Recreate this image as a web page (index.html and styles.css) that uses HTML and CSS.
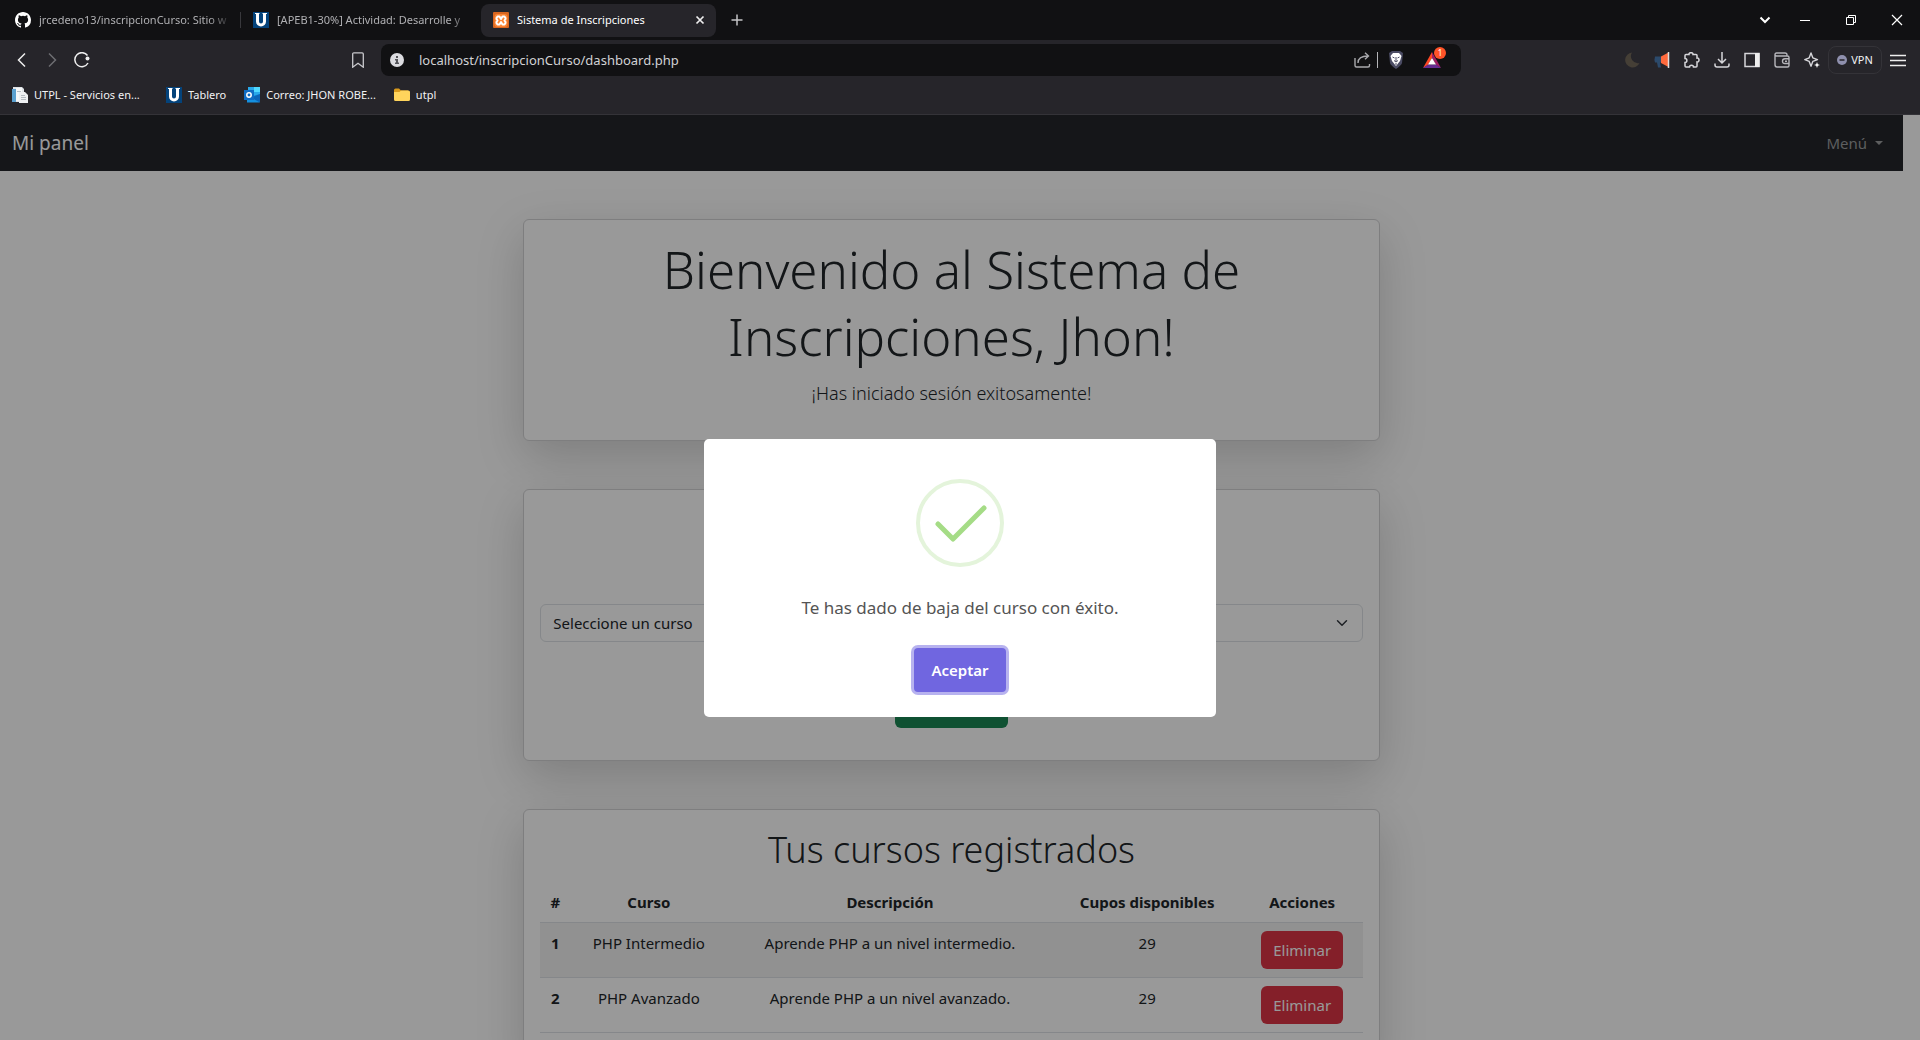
FILE: index.html
```html
<!DOCTYPE html>
<html lang="es">
<head>
<meta charset="utf-8">
<title>Sistema de Inscripciones</title>
<link rel="stylesheet" href="styles.css">
</head>
<body>
<header class="browser">
  <div class="tabstrip">
    <div class="tab">
      <svg class="icon16" viewBox="0 0 16 16"><path fill="#fff" d="M8 0C3.58 0 0 3.58 0 8c0 3.54 2.29 6.53 5.47 7.59.4.07.55-.17.55-.38 0-.19-.01-.82-.01-1.49-2.01.37-2.53-.49-2.69-.94-.09-.23-.48-.94-.82-1.13-.28-.15-.68-.52-.01-.53.63-.01 1.08.58 1.23.82.72 1.21 1.87.87 2.33.66.07-.52.28-.87.51-1.07-1.78-.2-3.64-.89-3.64-3.95 0-.87.31-1.59.82-2.15-.08-.2-.36-1.02.08-2.12 0 0 .67-.21 2.2.82a7.6 7.6 0 0 1 4 0c1.53-1.04 2.2-.82 2.2-.82.44 1.1.16 1.92.08 2.12.51.56.82 1.27.82 2.15 0 3.07-1.87 3.75-3.65 3.95.29.25.54.73.54 1.48 0 1.07-.01 1.93-.01 2.2 0 .21.15.46.55.38A8.01 8.01 0 0 0 16 8c0-4.42-3.58-8-8-8z"/></svg>
      <span class="tab-title tab-title-faded">jrcedeno13/inscripcionCurso: Sitio w</span>
    </div>
    <div class="tab tab-divided">
      <svg class="icon16" viewBox="0 0 16 16"><path fill="#04437b" d="M0 0h16v16H0z"/><path fill="none" stroke="#fff" stroke-width="3" d="M4.500 1v8.500a3.500 3.500 0 0 0 7 0V1"/><path stroke="#fff" d="M2 1.500h4.500M9.500 1.500H14"/></svg>
      <span class="tab-title tab-title-faded">[APEB1-30%] Actividad: Desarrolle y</span>
    </div>
    <div class="tab tab-active">
      <svg class="icon16" viewBox="0 0 16 16"><rect width="16" height="16" rx="1" fill="#d9661f"/><rect x="1.500" y="2" width="13" height="13" rx="3" fill="#fb8534"/><path fill="none" stroke="#fff" stroke-width="2" stroke-linejoin="round" d="M5.500 4.500h-1L3.500 6v1l1 1.500-1 1.500v1l1 1.500h2L8 10l1.500 2.500h2l1-1.500v-1l-1-1.500 1-1.500V6l-1-1.500h-2L8 7 6.500 4.500z"/></svg>
      <span class="tab-title">Sistema de Inscripciones</span>
      <button class="bare" aria-label="Cerrar pestaña"><svg width="10" height="10" viewBox="0 0 10 10"><path d="M1.500 1.500l7 7M8.500 1.500l-7 7" stroke="#eee" stroke-width="1.700"/></svg></button>
    </div>
    <button class="bare new-tab" aria-label="Nueva pestaña"><svg width="12" height="12" viewBox="0 0 12 12"><path d="M6 .5v11M.5 6h11" stroke="#c4c4c6" stroke-width="1.500"/></svg></button>
    <div class="window-buttons">
      <button class="bare tab-search" aria-label="Buscar pestañas"><svg width="12" height="12" viewBox="0 0 12 12"><path d="M1.500 3.500L6 8l4.500-4.500" fill="none" stroke="#fff" stroke-width="2"/></svg></button>
      <button class="bare" aria-label="Minimizar"><svg width="12" height="12" viewBox="0 0 12 12"><path d="M1 6.500h10" stroke="#fff"/></svg></button>
      <button class="bare" aria-label="Restaurar"><svg width="12" height="12" viewBox="0 0 12 12"><path d="M1.500 3.500h7v7h-7zM3.500 3V1.500h7v7H9" fill="none" stroke="#fff"/></svg></button>
      <button class="bare" aria-label="Cerrar"><svg width="12" height="12" viewBox="0 0 12 12"><path d="M1 1l10 10M11 1L1 11" stroke="#fff" stroke-width="1.200"/></svg></button>
    </div>
  </div>
  <div class="toolbar">
    <div class="nav-buttons">
      <button class="bare" aria-label="Atrás"><svg width="16" height="16" viewBox="0 0 16 16"><path d="M11 1.500L4.500 8l6.500 6.500" fill="none" stroke="#eee" stroke-width="1.500"/></svg></button>
      <button class="bare" aria-label="Adelante"><svg width="16" height="16" viewBox="0 0 16 16"><path d="M5 1.500L11.500 8 5 14.500" fill="none" stroke="#6d6d72" stroke-width="1.500"/></svg></button>
      <button class="bare" aria-label="Recargar"><svg width="16" height="16" viewBox="0 0 16 16"><path d="M13.500 3.500A7 7 0 1 0 14 11" fill="none" stroke="#eee" stroke-width="1.500"/><circle cx="13.500" cy="6.500" r="2" fill="#eee"/></svg></button>
      <button class="bare bookmark" aria-label="Añadir marcador"><svg width="16" height="16" viewBox="0 0 16 16"><path d="M2.700 15.200V2q0-1.200 1.200-1.200h8.200q1.200 0 1.200 1.200v13.200L8 11.300z" fill="none" stroke="#c9c9cd" stroke-width="1.300"/></svg></button>
    </div>
    <div class="address">
      <svg width="14" height="14" viewBox="0 0 14 14"><circle cx="7" cy="7" r="7" fill="#dcdce0"/><path d="M6 3h2v2H6zM5 6h3v3.500h1V11H5V9.500h1v-2H5z" fill="#55555a"/></svg>
      <input class="url" aria-label="Dirección" value="localhost/inscripcionCurso/dashboard.php">
      <svg width="17" height="16" viewBox="0 0 17 16"><path d="M1 6v7.500q0 1.500 1.500 1.500h11.500q1.500 0 1.500-1.500V12M4 11c0-4 3-7 10-7M11 .8L14.500 4 11 7.300" fill="none" stroke="#a9a9ad" stroke-width="1.400"/></svg>
      <span class="divider"></span>
      <svg width="16" height="18" viewBox="0 0 16 18"><path d="M4 0h8l3 2-1 10q-.5 2-6 6-5.500-4-6-6L1 2z" fill="#4a4b63"/><path d="M5 2h6l2.500 3-1.500 5-4 5-4-5-1.500-5z" fill="#fff"/><path d="M4.500 6l2 1M11.500 6l-2 1M8 6v4M6 9.500l2 1.500 2-1.500M7 13h2" stroke="#4a4b63" fill="none"/></svg>
      <span class="rewards">
        <svg width="18" height="16" viewBox="0 0 18 16"><path fill="#ff4724" d="M9 0L0 16l5-3 4-7z"/><path fill="#9e1f63" d="M9 0l9 16-5-3-4-7z"/><path fill="#662d91" d="M0 16h18l-5-3.500H5z"/><path fill="#fff" d="M9 6l4 6.500H5z"/></svg>
        <span class="badge">1</span>
      </span>
    </div>
    <div class="extensions">
      <svg width="16" height="16" viewBox="0 0 16 16"><path d="M8 .5A7.500 7.500 0 1 0 15.500 11 7 7 0 0 1 8 .5z" fill="#453f36"/></svg>
      <svg width="16" height="16" viewBox="0 0 16 16"><path d="M1 4.500h6v6H6l1 5H4l-1-5H1q-1-3 0-6z" fill="#2c4a6b"/><path d="M7 4.500L14 .8v14L7 11z" fill="#ff6a3d"/><path d="M14.500 0v16" stroke="#ddd" stroke-width="1.500"/></svg>
      <svg width="16" height="16" viewBox="0 0 16 16"><path d="M1 3.500q0-1 1-1h3c-.5-2.500 4.500-2.500 4 0h3q1 0 1 1V6c2.700-.5 2.700 4.500 0 4v4q0 1-1 1H9.500c0-2.500-4-2.500-4 0H2q-1 0-1-1v-3.500c2.500 0 2.500-4 0-4z" fill="none" stroke="#d6d6da" stroke-width="1.500"/></svg>
      <svg width="16" height="16" viewBox="0 0 16 16"><path d="M8 0v10.500M4 7l4 4 4-4M1 11.500V13q0 2 2 2h10q2 0 2-2v-1.500" fill="none" stroke="#d6d6da" stroke-width="1.500"/></svg>
      <svg width="16" height="16" viewBox="0 0 16 16"><rect x="1" y="1.500" width="14" height="13" fill="none" stroke="#d6d6da" stroke-width="1.500"/><path d="M11 1h4.500v14H11z" fill="#eee"/></svg>
      <svg width="16" height="16" viewBox="0 0 16 16"><path d="M13 3.500V3q0-2-2-2H2.500Q1 1 1 2.500v10Q1 15 3 15h10.500q1.500 0 1.500-1.500v-8Q15 4 13.500 4H2.500Q1 4 1 2.500M15 6.800h-4q-2.500 0-2.500 2.400T11 11.500h4M11 9.200h2" fill="none" stroke="#b5b5ba" stroke-width="1.400"/></svg>
      <svg width="16" height="16" viewBox="0 0 16 16"><path d="M7 1l1.800 4.800L13.500 7.600 8.800 9.400 7 14.200 5.200 9.400.8 7.600l4.400-1.800z" fill="none" stroke="#d6d6da" stroke-width="1.400" stroke-linejoin="round"/><path d="M13 10l.8 2.200 2.200.8-2.200.8L13 16l-.8-2.200L10 13l2.200-.8z" fill="#fff"/></svg>
      <button class="vpn"><svg width="10" height="10" viewBox="0 0 10 10"><circle cx="5" cy="5" r="5" fill="#8f90ae"/><path d="M2.500 5h5" stroke="#26252a" stroke-width="1.500"/></svg>VPN</button>
      <button class="bare" aria-label="Menú del navegador"><svg width="16" height="14" viewBox="0 0 16 14"><path d="M0 2.500h16M0 7.500h16M0 12.500h16" stroke="#eee" stroke-width="1.500"/></svg></button>
    </div>
  </div>
  <nav class="bookmarks">
    <a href="#" class="mark mark-wide"><svg class="icon16" viewBox="0 0 16 16"><path fill="#dfe4e8" d="M1 0h9l2 2v13H1z"/><path fill="#5aa0cf" d="M0 2h4v13H0z"/><path fill="#f5f7f8" d="M4 1h6v13H4z"/><path fill="#eef0f2" d="M7 5h6l3 3v8H7z"/><path stroke="#b5bcc2" d="M9 8.500h4M9 10.500h5M9 12.500h5M5 4.500h4"/></svg>UTPL - Servicios en...</a>
    <a href="#" class="mark"><svg class="icon16" viewBox="0 0 16 16"><path fill="#04437b" d="M0 0h16v16H0z"/><path fill="none" stroke="#fff" stroke-width="3" d="M4.500 1v8.500a3.500 3.500 0 0 0 7 0V1"/><path stroke="#fff" d="M2 1.500h4.500M9.500 1.500H14"/></svg>Tablero</a>
    <a href="#" class="mark"><svg class="icon16" viewBox="0 0 16 16"><path fill="#28a8ea" d="M4 0h12v9H4z"/><path fill="#50d9ff" d="M10 0h6v5h-6z"/><path fill="#1490df" d="M3 15.500V10l13-3v7.500q0 1-1 1z"/><path fill="#0a64b8" d="M16 7v8.500l-9-5z"/><path fill="#0f6cc4" d="M0 3h10v10H0z"/><circle cx="5" cy="8" r="2.200" fill="none" stroke="#fff" stroke-width="1.500"/></svg>Correo: JHON ROBE...</a>
    <a href="#" class="mark"><svg class="icon16" viewBox="0 0 16 16"><path fill="#d99a1c" d="M0 3q0-1.500 1.500-1.500H5L7 3.500h7v3H0z"/><path fill="#ffd45c" d="M0 5h5.500L7 3.500h7.500Q16 3.500 16 5v7.500q0 1.500-1.500 1.500h-13Q0 14 0 12.500z"/></svg>utpl</a>
  </nav>
</header>

<div class="viewport">
  <div class="page">
    <nav class="navbar">
      <a href="#" class="brand">Mi panel</a>
      <button class="menu-toggle">Menú</button>
    </nav>
    <main class="content">
      <section class="card">
        <h1 class="display">Bienvenido al Sistema de Inscripciones, Jhon!</h1>
        <p class="lead">¡Has iniciado sesión exitosamente!</p>
      </section>
      <form class="card enroll">
        <select class="course-select" aria-label="Curso"><option>Seleccione un curso</option></select>
        <button type="button" class="enroll-button" aria-label="Inscribir"></button>
      </form>
      <section class="card">
        <h2 class="section-title">Tus cursos registrados</h2>
        <table class="courses">
          <colgroup><col class="col-number"><col class="col-course"><col><col class="col-seats"><col class="col-actions"></colgroup>
          <thead><tr><th>#</th><th>Curso</th><th>Descripción</th><th>Cupos disponibles</th><th>Acciones</th></tr></thead>
          <tbody>
            <tr><th>1</th><td>PHP Intermedio</td><td>Aprende PHP a un nivel intermedio.</td><td>29</td><td><button class="delete">Eliminar</button></td></tr>
            <tr><th>2</th><td>PHP Avanzado</td><td>Aprende PHP a un nivel avanzado.</td><td>29</td><td><button class="delete">Eliminar</button></td></tr>
          </tbody>
        </table>
      </section>
    </main>
  </div>
  <div class="overlay">
    <div class="dialog" role="dialog" aria-modal="true">
      <svg class="success" viewBox="0 0 88 88"><circle cx="44" cy="44" r="42" fill="none" stroke="#e4f4db" stroke-width="4"/><path d="M22 45l15 15 31-31" fill="none" stroke="#a5dc86" stroke-width="5" stroke-linecap="round" stroke-linejoin="round"/></svg>
      <p class="message">Te has dado de baja del curso con éxito.</p>
      <button class="accept">Aceptar</button>
    </div>
  </div>
</div>
</body>
</html>
```
FILE: styles.css
```css
* { box-sizing: border-box; }

body {
  margin: 0;
  height: 100vh;
  display: flex;
  flex-direction: column;
  overflow: hidden;
  font-family: "Noto Sans", "Open Sans", sans-serif;
  font-size: 15px;
  line-height: 24px;
  color: #212529;
  background: #fff;
}

button, select, input { font: inherit; color: inherit; }
svg { display: block; flex: none; }
h1, h2, p { margin: 0; font-weight: 300; }
a { text-decoration: none; color: inherit; }

.bare { border: 0; padding: 0; background: none; }
.icon16 { width: 16px; height: 16px; }

/* Browser frame */
.browser {
  flex: none;
  background: #26252a;
  border-bottom: 1px solid #343338;
  color: #f2f2f4;
  font-size: 11px;
  line-height: 16px;
}
.tabstrip {
  display: flex;
  align-items: center;
  height: 40px;
  padding-left: 3px;
  background: #111113;
}
.tab {
  display: flex;
  align-items: center;
  gap: 8px;
  width: 237px;
  height: 16px;
  padding: 0 8px 0 12px;
  color: #b0b0b3;
}
.tab-divided {
  width: 241px;
  border-left: 1px solid #38383c;
}
.tab-title {
  flex: 1;
  overflow: hidden;
  white-space: nowrap;
}
.tab-title-faded { mask-image: linear-gradient(to right, #000 88%, transparent); }
.tab-active {
  width: 235px;
  height: 33px;
  padding-right: 11px;
  border-radius: 8px;
  background: #26252a;
  color: #fff;
}
.new-tab { margin-left: 15px; }
.window-buttons {
  display: flex;
  gap: 34px;
  margin-left: auto;
  padding-right: 17px;
}
.tab-search { margin-right: -6px; }

.toolbar {
  display: grid;
  grid-template-columns: 381px 1fr 459px;
  align-items: center;
  padding: 4px 0;
}
.nav-buttons {
  display: flex;
  gap: 14px;
  padding: 0 15px 0 14px;
}
.bookmark { margin-left: auto; }
.address {
  display: flex;
  align-items: center;
  height: 32px;
  padding: 0 20px 0 9px;
  border-radius: 8px;
  background: #111113;
}
.url {
  flex: 1;
  border: 0;
  padding: 0 15px;
  background: none;
  font-size: 13px;
  color: #d2d2d5;
}
.divider {
  width: 1px;
  height: 16px;
  margin: 0 10px 0 6px;
  background: #b5b5b8;
}
.rewards {
  position: relative;
  margin-left: 19px;
}
.badge {
  position: absolute;
  top: -5px;
  right: -5px;
  width: 12px;
  height: 12px;
  border-radius: 6px;
  background: #ff5328;
  color: #fff;
  font-size: 8px;
  line-height: 12px;
  text-align: center;
}
.extensions {
  display: flex;
  align-items: center;
  justify-content: flex-end;
  gap: 14px;
  padding-right: 14px;
}
.vpn {
  display: flex;
  align-items: center;
  justify-content: center;
  gap: 4px;
  width: 54px;
  height: 28px;
  margin: 0 -6px;
  padding: 0;
  border: 1px solid #343338;
  border-radius: 8px;
  background: none;
}
.bookmarks {
  display: flex;
  gap: 18px;
  padding: 7px 12px 11px;
}
.mark {
  display: flex;
  align-items: center;
  gap: 6px;
}
.mark-wide { width: 136px; }

/* Page */
.viewport {
  position: relative;
  flex: 1;
  overflow: hidden;
}
.page { margin-right: 17px; }
.navbar {
  display: flex;
  align-items: center;
  justify-content: space-between;
  height: 56px;
  padding: 0 20px 0 12px;
  background: #23262b;
}
.brand { font-size: 19px; color: #fff; }
.menu-toggle {
  display: flex;
  align-items: center;
  gap: 8px;
  border: 0;
  padding: 0;
  background: none;
  color: #9b9d9e;
}
.menu-toggle::after {
  content: "";
  border: 4px solid transparent;
  border-top-color: currentColor;
  border-bottom: 0;
}
.content {
  display: flex;
  flex-direction: column;
  gap: 48px;
  width: 45%;
  min-width: 600px;
  margin: 48px auto;
  text-align: center;
}
.card {
  padding: 16px;
  border: 1px solid #d3d3d4;
  border-radius: 6px;
  background: #fff;
  box-shadow: 0 16px 48px rgba(0, 0, 0, 0.175);
}
.display { font-size: 51px; line-height: 67px; margin-bottom: 8px; }
.lead { font-size: 18px; line-height: 30px; margin-bottom: 16px; }

.enroll {
  display: grid;
  gap: 48px;
  padding: 114px 16px 32px;
}
.course-select {
  appearance: none;
  width: 100%;
  height: 38px;
  padding: 0 12px;
  border: 1px solid #dee2e6;
  border-radius: 6px;
  background: #fff url("data:image/svg+xml,%3Csvg xmlns='http://www.w3.org/2000/svg' viewBox='0 0 16 16'%3E%3Cpath fill='none' stroke='%23343a40' stroke-linecap='round' stroke-linejoin='round' stroke-width='2' d='m2 5 6 6 6-6'/%3E%3C/svg%3E") no-repeat right 12px center / 16px 12px;
}
.enroll-button {
  justify-self: center;
  width: 113px;
  height: 38px;
  border: 0;
  border-radius: 6px;
  background: #198754;
}

.section-title { font-size: 36px; line-height: 48px; margin-bottom: 8px; }
.courses {
  width: 100%;
  table-layout: fixed;
  border-collapse: collapse;
  margin-bottom: 16px;
}
.courses th, .courses td {
  padding: 8px 0;
  border-bottom: 1px solid #dee2e6;
  vertical-align: top;
}
.courses tbody tr:nth-child(odd) { background: #f2f2f2; }
.col-number { width: 30px; }
.col-course { width: 157px; }
.col-seats { width: 189px; }
.col-actions { width: 121px; }
.delete {
  display: block;
  width: 82px;
  height: 38px;
  margin: 0 auto;
  border: 0;
  border-radius: 6px;
  padding: 0;
  background: #dc3545;
  color: #fff;
}

/* Alert */
.overlay {
  position: absolute;
  inset: 0;
  display: grid;
  place-items: center;
  background: rgba(0, 0, 0, 0.4);
}
.dialog {
  display: flex;
  flex-direction: column;
  align-items: center;
  width: 512px;
  padding: 40px 16px 25px;
  border-radius: 5px;
  background: #fff;
}
.success { width: 88px; height: 88px; }
.message {
  margin: 29px 0 28px;
  font-size: 17px;
  font-weight: 400;
  color: #545454;
}
.accept {
  width: 92px;
  height: 44px;
  border: 0;
  border-radius: 4px;
  padding: 0;
  background: #7066e0;
  box-shadow: 0 0 0 3px rgba(112, 102, 224, 0.5);
  color: #fff;
  font-weight: 600;
}
```
